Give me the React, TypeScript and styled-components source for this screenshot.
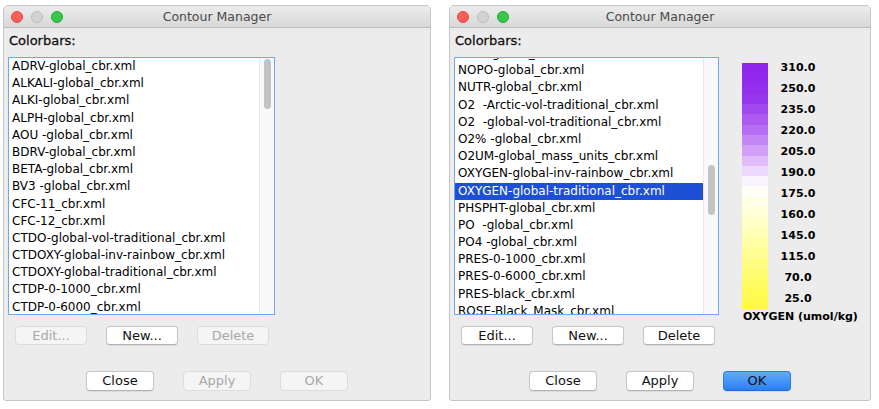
import React from "react";
import styled, { createGlobalStyle } from "styled-components";

const GlobalStyle = createGlobalStyle`
  html, body {
    margin: 0;
    padding: 0;
    background: #ffffff;
  }
  body {
    font-family: "DejaVu Sans", "Liberation Sans", sans-serif;
    color: #000;
  }
  * {
    box-sizing: border-box;
  }
`;

const leftItems = [
  "ADRV-global_cbr.xml",
  "ALKALI-global_cbr.xml",
  "ALKI-global_cbr.xml",
  "ALPH-global_cbr.xml",
  "AOU -global_cbr.xml",
  "BDRV-global_cbr.xml",
  "BETA-global_cbr.xml",
  "BV3 -global_cbr.xml",
  "CFC-11_cbr.xml",
  "CFC-12_cbr.xml",
  "CTDO-global-vol-traditional_cbr.xml",
  "CTDOXY-global-inv-rainbow_cbr.xml",
  "CTDOXY-global-traditional_cbr.xml",
  "CTDP-0-1000_cbr.xml",
  "CTDP-0-6000_cbr.xml",
];

const rightItems = [
  "NO3 -global_cbr.xml",
  "NOPO-global_cbr.xml",
  "NUTR-global_cbr.xml",
  "O2  -Arctic-vol-traditional_cbr.xml",
  "O2  -global-vol-traditional_cbr.xml",
  "O2% -global_cbr.xml",
  "O2UM-global_mass_units_cbr.xml",
  "OXYGEN-global-inv-rainbow_cbr.xml",
  "OXYGEN-global-traditional_cbr.xml",
  "PHSPHT-global_cbr.xml",
  "PO  -global_cbr.xml",
  "PO4 -global_cbr.xml",
  "PRES-0-1000_cbr.xml",
  "PRES-0-6000_cbr.xml",
  "PRES-black_cbr.xml",
  "ROSE-Black_Mask_cbr.xml",
];

const scaleLabels = [
  "310.0", "250.0", "235.0", "220.0", "205.0", "190.0",
  "175.0", "160.0", "145.0", "115.0", "70.0", "25.0",
];

// colour keys of the OXYGEN colourbar, top to bottom
const keys: [number, number[]][] = [
  [0, [144, 38, 236]],
  [0.12, [150, 50, 238]],
  [0.25, [180, 104, 243]],
  [0.37, [216, 172, 249]],
  [0.45, [242, 228, 254]],
  [0.5, [255, 255, 255]],
  [0.62, [255, 255, 212]],
  [0.75, [255, 255, 160]],
  [0.88, [255, 253, 110]],
  [1, [255, 248, 70]],
];

function colourAt(t: number) {
  for (let i = 1; i < keys.length; i++) {
    const [t1, c1] = keys[i];
    const [t0, c0] = keys[i - 1];
    if (t <= t1) {
      const f = (t - t0) / (t1 - t0);
      const c = c0.map((v, k) => Math.round(v + (c1[k] - v) * f));
      return `rgb(${c[0]}, ${c[1]}, ${c[2]})`;
    }
  }
  return "rgb(255, 248, 70)";
}

function bandGradient(count: number) {
  const parts: string[] = [];
  for (let i = 0; i < count; i++) {
    const from = ((i / count) * 100).toFixed(2);
    const to = (((i + 1) / count) * 100).toFixed(2);
    parts.push(`${colourAt(i / (count - 1))} ${from}% ${to}%`);
  }
  return `linear-gradient(to bottom, ${parts.join(", ")})`;
}

const oxygenBands = bandGradient(24);

type ButtonSpec = { label: string; disabled?: boolean; primary?: boolean };

function ContourManager({
  width,
  items,
  selected,
  offset,
  thumbTop,
  listWidth,
  actions,
  footer,
  legend,
}: {
  width: number;
  items: string[];
  selected?: number;
  offset: number;
  thumbTop: number;
  listWidth: number;
  actions: ButtonSpec[];
  footer: ButtonSpec[];
  legend?: boolean;
}) {
  return (
    <Window $width={width}>
      <TitleBar>
        <Lights>
          <Light $color="#fc5f57" $edge="#de4a43" />
          <Light $color="#d3d3d3" $edge="#bdbdbd" />
          <Light $color="#35c84a" $edge="#25a93a" />
        </Lights>
        <Title>Contour Manager</Title>
        <span />
      </TitleBar>
      <Body>
        <Label>Colorbars:</Label>
        <TopRow>
          <ListBox $width={listWidth}>
            <Rows>
              <RowStack $offset={offset}>
                {items.map((item, i) => (
                  <Row key={item} $selected={i === selected}>
                    {item}
                  </Row>
                ))}
              </RowStack>
            </Rows>
            <Track>
              <Thumb $top={thumbTop} />
            </Track>
          </ListBox>
          {legend && (
            <Legend>
              <ScaleRow>
                <Bar style={{ background: oxygenBands }} />
                <Scale>
                  {scaleLabels.map((l) => (
                    <ScaleLabel key={l}>{l}</ScaleLabel>
                  ))}
                </Scale>
              </ScaleRow>
              <LegendTitle>OXYGEN (umol/kg)</LegendTitle>
            </Legend>
          )}
        </TopRow>
        <ActionRow>
          {actions.map((b) => (
            <Button key={b.label} $w={72} $h={19} disabled={b.disabled}>
              {b.label}
            </Button>
          ))}
        </ActionRow>
        <FooterRow>
          {footer.map((b) => (
            <Button
              key={b.label}
              $w={68}
              $h={20}
              $primary={b.primary}
              disabled={b.disabled}
            >
              {b.label}
            </Button>
          ))}
        </FooterRow>
      </Body>
    </Window>
  );
}

export default function App() {
  return (
    <>
      <GlobalStyle />
      <Desktop>
        <ContourManager
          width={428}
          items={leftItems}
          offset={0}
          thumbTop={1}
          listWidth={267}
          actions={[
            { label: "Edit...", disabled: true },
            { label: "New..." },
            { label: "Delete", disabled: true },
          ]}
          footer={[
            { label: "Close" },
            { label: "Apply", disabled: true },
            { label: "OK", disabled: true },
          ]}
        />
        <ContourManager
          width={422}
          items={rightItems}
          selected={8}
          offset={-13}
          thumbTop={107}
          listWidth={265}
          legend
          actions={[
            { label: "Edit..." },
            { label: "New..." },
            { label: "Delete" },
          ]}
          footer={[
            { label: "Close" },
            { label: "Apply" },
            { label: "OK", primary: true },
          ]}
        />
      </Desktop>
    </>
  );
}

const Desktop = styled.div`
  display: flex;
  align-items: flex-start;
  gap: 18px;
  padding: 5px 0 0 3px;
`;

const Window = styled.div<{ $width: number }>`
  width: ${(p) => p.$width}px;
  background: #ececec;
  border: 1px solid #c6c6c6;
  border-radius: 5px 5px 3px 3px;
  overflow: hidden;
`;

const TitleBar = styled.div`
  height: 22px;
  display: grid;
  grid-template-columns: 1fr auto 1fr;
  align-items: center;
  background: linear-gradient(to bottom, #ececec, #d8d8d8);
  border-bottom: 1px solid #bcbcbc;
`;

const Lights = styled.div`
  display: flex;
  gap: 8px;
  padding-left: 7px;
`;

const Light = styled.span<{ $color: string; $edge: string }>`
  width: 12px;
  height: 12px;
  border-radius: 50%;
  background: ${(p) => p.$color};
  border: 1px solid ${(p) => p.$edge};
`;

const Title = styled.div`
  font-size: 12.5px;
  color: #4a4a4a;
  line-height: 21px;
`;

const Body = styled.div`
  padding: 5px 4px 9px 4px;
`;

const Label = styled.div`
  font-size: 13px;
  line-height: 16px;
  height: 16px;
  margin: 0 0 8px 1px;
  color: #111;
  -webkit-text-stroke: 0.3px #111;
`;

const TopRow = styled.div`
  display: flex;
  align-items: flex-start;
  height: 258px;
`;

const ListBox = styled.div<{ $width: number }>`
  width: ${(p) => p.$width}px;
  height: 258px;
  display: flex;
  background: #ffffff;
  border: 1px solid #6ea8ee;
  overflow: hidden;
`;

const Rows = styled.div`
  flex: 1;
  overflow: hidden;
`;

const RowStack = styled.div<{ $offset: number }>`
  margin-top: ${(p) => p.$offset}px;
`;

const Row = styled.div<{ $selected?: boolean }>`
  height: 17.2px;
  line-height: 17.2px;
  padding-left: 3px;
  font-size: 12px;
  white-space: pre;
  color: ${(p) => (p.$selected ? "#ffffff" : "#000000")};
  background: ${(p) => (p.$selected ? "#1d50d6" : "transparent")};
`;

const Track = styled.div`
  width: 15px;
  flex: none;
  background: #f9f9f9;
  border-left: 1px solid #e9e9e9;
`;

const Thumb = styled.div<{ $top: number }>`
  width: 7px;
  height: 50px;
  margin: ${(p) => p.$top}px auto 0 auto;
  border-radius: 4px;
  background: #c3c3c3;
`;

const Legend = styled.div`
  margin-left: 23px;
  display: flex;
  flex-direction: column;
`;

const ScaleRow = styled.div`
  display: flex;
  align-items: flex-start;
`;

const Bar = styled.div`
  width: 26px;
  height: 247px;
  margin-top: 6px;
`;

const Scale = styled.div`
  width: 60px;
  display: flex;
  flex-direction: column;
`;

const ScaleLabel = styled.div`
  height: 21px;
  line-height: 21px;
  text-align: center;
  font-size: 11px;
  font-weight: bold;
  color: #000;
`;

const LegendTitle = styled.div`
  font-size: 11px;
  font-weight: bold;
  line-height: 14px;
  white-space: nowrap;
  margin-left: 1px;
`;

const ActionRow = styled.div`
  display: flex;
  gap: 19px;
  margin-top: 11px;
  padding-left: 7px;
`;

const FooterRow = styled.div`
  display: flex;
  justify-content: center;
  gap: 29px;
  margin-top: 26px;
`;

const Button = styled.button<{ $w: number; $h: number; $primary?: boolean }>`
  width: ${(p) => p.$w}px;
  height: ${(p) => p.$h}px;
  padding: 0;
  font-family: "DejaVu Sans", "Liberation Sans", sans-serif;
  font-size: 13px;
  line-height: ${(p) => p.$h - 2}px;
  color: #111;
  background: ${(p) =>
    p.$primary ? "linear-gradient(to bottom, #62aafb, #2b7ff6)" : "#ffffff"};
  border: 1px solid ${(p) => (p.$primary ? "#2f7ae6" : "#c6c6c6")};
  border-bottom-color: ${(p) => (p.$primary ? "#1f68d8" : "#b2b2b2")};
  border-radius: 4px;
  box-shadow: 0 0.5px 1px rgba(0, 0, 0, 0.08);

  &:disabled {
    color: #a8a8a8;
    background: #f5f5f5;
    border-color: #dcdcdc;
    box-shadow: none;
  }
`;
